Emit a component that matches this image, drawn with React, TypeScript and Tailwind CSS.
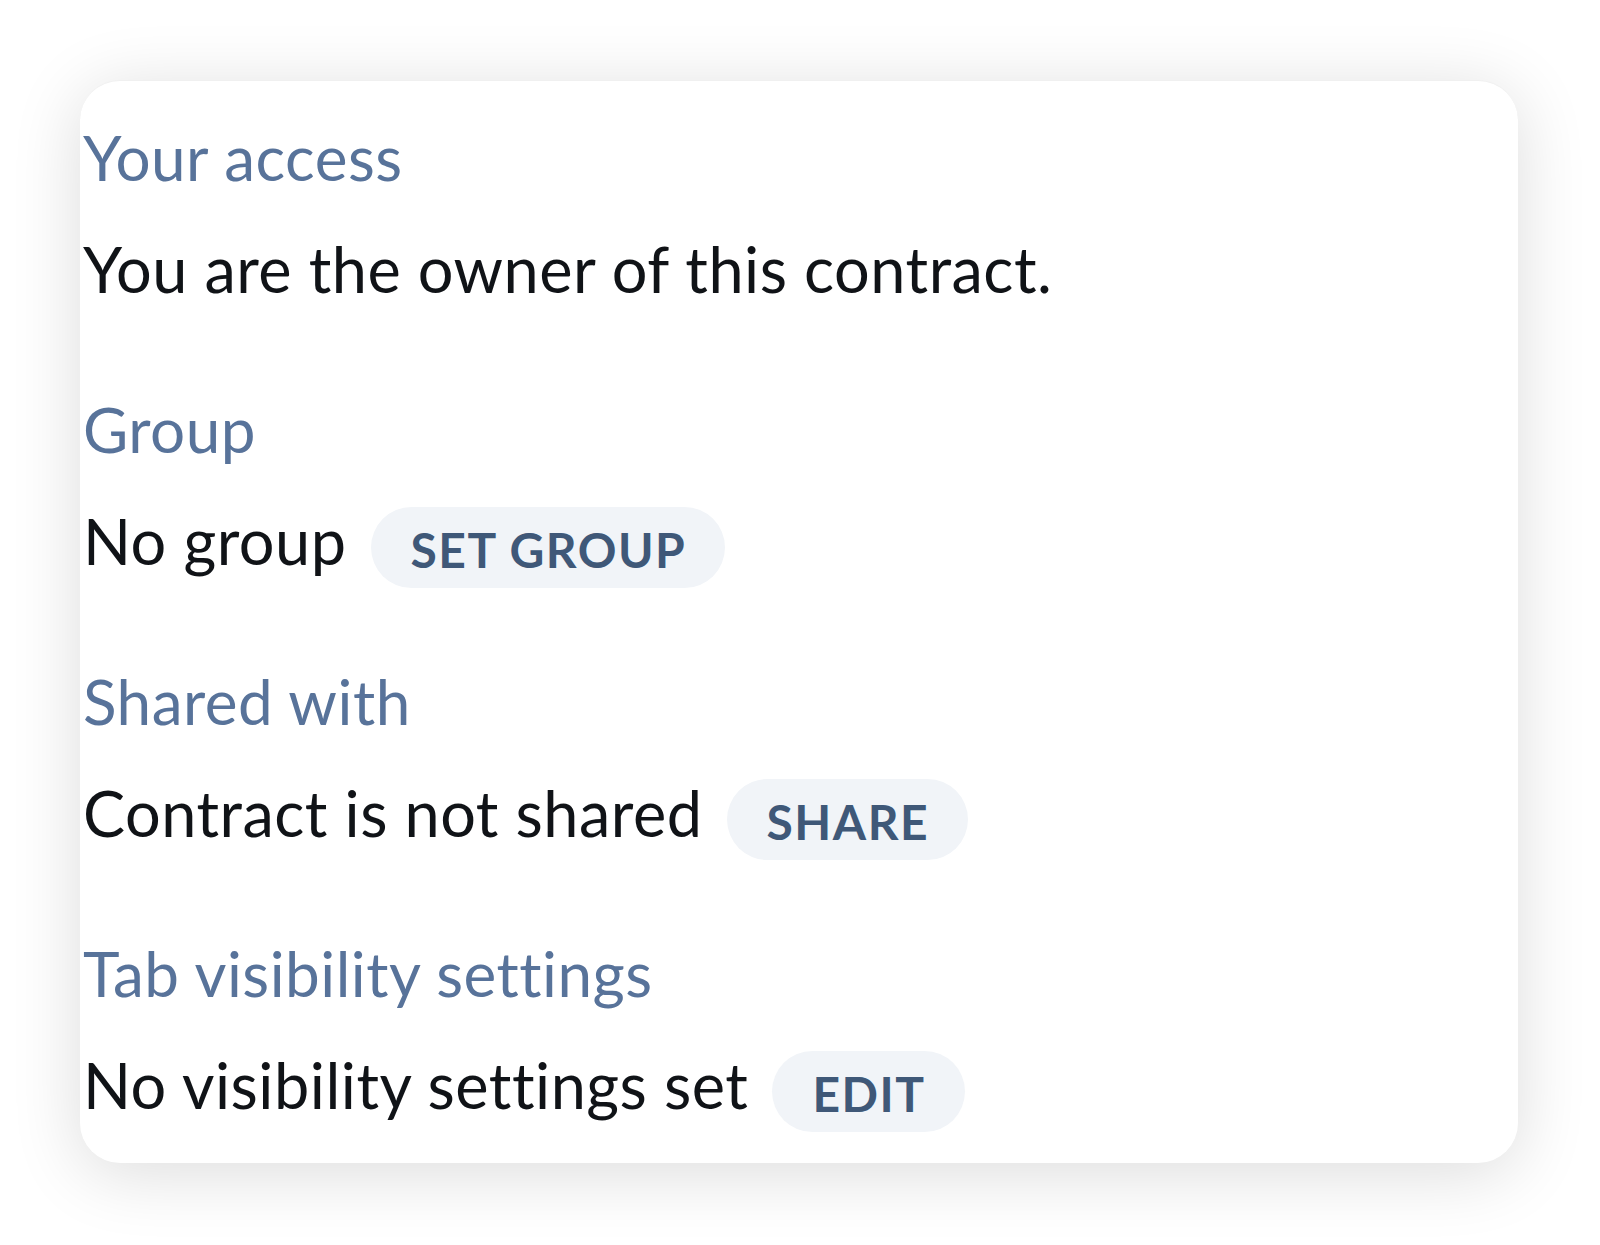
function Pill({ label }: { label: string }) {
    return (
        <button className="mt-[2px] flex h-[81px] items-center rounded-full bg-[#f1f4f8] pr-[39px] pl-10 pt-1 text-[48px] leading-none font-bold tracking-[1.5px] text-[#3f5878]">
            {label}
        </button>
    );
}

function Section({ title, text, action }: { title: string; text: string; action?: string }) {
    return (
        <div className="mb-[77px] last:mb-0">
            <div className="text-[62px] leading-[72px] tracking-[0.5px] text-[#58739a]">{title}</div>
            <div className="mt-10 flex min-h-[83px] items-start gap-6">
                <span className="text-[63px] leading-[72px] tracking-[0.5px] text-[#101317]">{text}</span>
                {action && <Pill label={action} />}
            </div>
        </div>
    );
}

export default function App() {
    return (
        <div className="min-h-[1245px] bg-white pt-20 pl-20 font-['Lato',sans-serif] [font-variant-ligatures:none]">
            <div className="h-[1083px] w-[1438px] rounded-[40px] border-t border-[#f0f0f0] bg-white pt-[40px] pl-[3px] shadow-[0_10px_70px_rgba(0,0,0,0.14)]">
                <Section title="Your access" text="You are the owner of this contract." />
                <Section title="Group" text="No group" action="SET GROUP" />
                <Section title="Shared with" text="Contract is not shared" action="SHARE" />
                <Section title="Tab visibility settings" text="No visibility settings set" action="EDIT" />
            </div>
        </div>
    );
}
